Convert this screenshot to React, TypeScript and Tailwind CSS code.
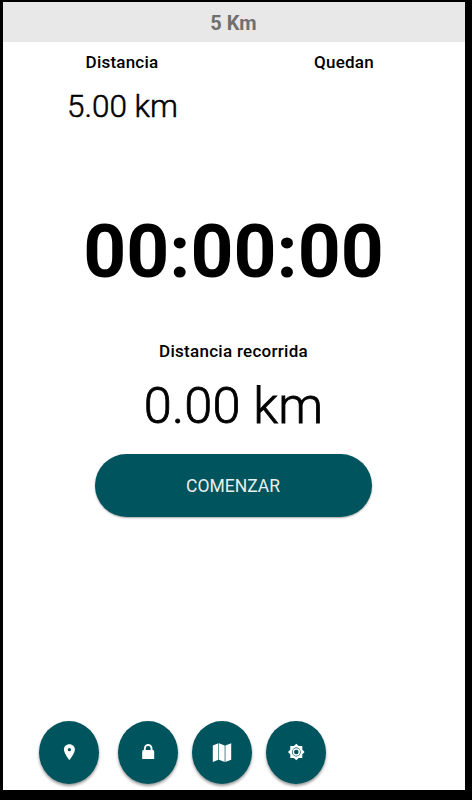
import React from 'react';

// Botones de la barra inferior
const actions = [
  {
    id: 'location',
    label: 'Ubicación',
    margin: '',
    viewBox: '0 0 28 28',
    path: 'M14.4 6.2C11.2 6.2 8.9 8.6 8.9 11.6C8.9 15.6 14.4 22.2 14.4 22.2S19.9 15.6 19.9 11.6C19.9 8.6 17.6 6.2 14.4 6.2ZM14.4 13.3A1.6 1.6 0 1 1 14.4 10.1A1.6 1.6 0 0 1 14.4 13.3Z',
  },
  {
    id: 'lock',
    label: 'Bloquear',
    margin: 'ml-[18.5px]',
    viewBox: '0 0 28 28',
    path: 'M18.5 12V10.4A4.3 4.3 0 0 0 9.9 10.4V12Q8.2 12 8.2 13.4V21H20.2V13.4Q20.2 12 18.5 12ZM11.8 12V10.4A2.4 2.4 0 0 1 16.6 10.4V12Z',
  },
  {
    id: 'map',
    label: 'Mapa',
    margin: 'ml-3.5',
    viewBox: '0 0 28 28',
    path: 'M4.8 7.4L10.4 5.3V21.7L4.8 23.9ZM11 5.3L16.7 7.4V23.9L11 21.7ZM17.4 7.4L23.2 5.3V21.7L17.4 23.9Z',
  },
  {
    id: 'settings',
    label: 'Ajustes',
    margin: 'ml-3.5',
    viewBox: '0 0 28 28',
    path: 'M14.3 5.7L16.7 8H20.3V11.6L22.6 14L20.3 16.4V20H16.7L14.3 22.3L11.9 20H8.3V16.4L6 14L8.3 11.6V8H11.9ZM14.3 9.6A4.4 4.4 0 1 0 14.3 18.4A4.4 4.4 0 0 0 14.3 9.6ZM14.3 10.3A3.7 3.7 0 1 1 14.3 17.7A3.7 3.7 0 0 1 14.3 10.3ZM14.3 11.7A2.3 2.3 0 1 0 14.3 16.3A2.3 2.3 0 0 0 14.3 11.7Z',
  },
];

const App: React.FC = () => {
  return (
    <div className="h-[800px] w-[472px] bg-black pl-[3px] pt-0.5 font-['Roboto',sans-serif]">
      <div className="flex h-[787.5px] w-[462px] flex-col bg-white text-black">
        {/* Cabecera */}
        <header className="h-10 shrink-0 bg-[#e8e8e8] pr-px text-center text-[20px] leading-[43px] font-bold text-[#707070]">
          5 Km
        </header>

        {/* Objetivo de la carrera */}
        <div className="grid h-[90px] grid-cols-[238px_1fr] pt-2 text-center">
          <div>
            <h2 className="text-[17px] leading-6 font-medium tracking-[0.22px]">Distancia</h2>
            <p className="pt-3.5 pl-px text-[31.5px] leading-[38px] font-light [-webkit-text-stroke:0.5px_black]">
              5.00 km
            </p>
          </div>
          <div>
            <h2 className="pr-[18px] text-[17px] leading-6 font-medium tracking-[0.22px]">Quedan</h2>
          </div>
        </div>

        {/* Cronómetro */}
        <div className="mt-[74px] pr-px text-center text-[75px] leading-[90px] font-bold">00:00:00</div>

        <div className="mt-[43px] pr-px text-center">
          <h2 className="text-[17px] leading-6 font-medium tracking-[0.28px]">Distancia recorrida</h2>
          <p className="mt-[13px] text-[50.5px] leading-[60px] font-light tracking-[0.2px] [-webkit-text-stroke:0.8px_black]">
            0.00 km
          </p>
        </div>

        <button className="mt-[18px] mr-0.5 h-[63px] w-[277px] shrink-0 self-center rounded-full bg-[#00545d] pt-0.5 text-[17.5px] text-[#e8efef] shadow-[0_1px_2px_rgba(0,0,0,0.35)]">
          COMENZAR
        </button>

        {/* Acciones */}
        <div className="mt-auto flex pb-1.5 pl-9">
          {actions.map(action => (
            <button
              key={action.id}
              aria-label={action.label}
              className={`flex h-[63px] w-[60px] items-center justify-center rounded-[50%] bg-[#00545d] shadow-[0_2px_3px_rgba(0,0,0,0.4)] ${action.margin}`}
            >
              <svg viewBox={action.viewBox} className="h-7 w-7 fill-white">
                <path fillRule="evenodd" d={action.path} />
              </svg>
            </button>
          ))}
        </div>
      </div>
    </div>
  );
};

export default App;
